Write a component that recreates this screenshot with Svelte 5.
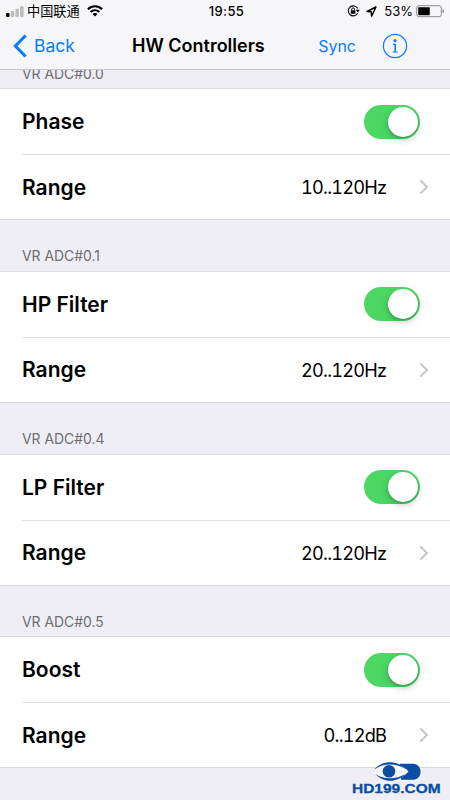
<script>
  const sections = [
    { header: 'VR ADC#0.0', name: 'Phase', range: '10..120Hz' },
    { header: 'VR ADC#0.1', name: 'HP Filter', range: '20..120Hz' },
    { header: 'VR ADC#0.4', name: 'LP Filter', range: '20..120Hz' },
    { header: 'VR ADC#0.5', name: 'Boost', range: '0..12dB' }
  ];
</script>

<div class="screen">
  <header class="top">
    <div class="status">
      <div class="carrier">
        <svg class="bars" width="18" height="12" viewBox="0 0 18 12">
          <rect x="0" y="7" width="3.5" height="4" rx="1" fill="#050505" />
          <rect x="4.7" y="5" width="3.5" height="6" rx="1" fill="#bdbdbe" />
          <rect x="9.4" y="2.7" width="3.5" height="8.3" rx="1" fill="#bdbdbe" />
          <rect x="14.1" y="0.3" width="3.5" height="10.7" rx="1" fill="#bdbdbe" />
        </svg>
        <span class="operator">中国联通</span>
        <svg class="wifi" width="16" height="12" viewBox="0 0 16 12" fill="none" stroke="#000" stroke-width="2.1">
          <path d="M.9 4.2C5 .3 11 .3 15.1 4.2" />
          <path d="M3.6 7C6.2 4.6 9.8 4.6 12.4 7" />
          <path d="M8 11.4 5.5 8.9C7 7.7 9 7.7 10.5 8.9Z" fill="#000" stroke="none" />
        </svg>
      </div>
      <span class="clock">19:55</span>
      <div class="indicators">
        <svg class="lock" width="13" height="12" viewBox="0 0 13 12">
          <path d="M10.7 8.2A5 5 0 1 1 10.7 3.5" fill="none" stroke="#000" stroke-width="1.1" />
          <path d="M8.8 4.8h4l-2 2.8Z" />
          <rect x="3.8" y="5.3" width="4.6" height="3.5" rx=".4" />
          <path d="M4.7 5.5V4.3a1.4 1.4 0 0 1 2.8 0v1.2" fill="none" stroke="#000" stroke-width="1" />
        </svg>
        <svg class="arrow" width="11" height="11" viewBox="0 0 11 11">
          <path d="M1 5.5 10 1 5.6 10.1 5.2 5.8Z" fill="none" stroke="#000" stroke-width="1.4" stroke-linejoin="round" />
        </svg>
        <span class="percent">53%</span>
        <svg class="battery" width="29" height="13" viewBox="0 0 29 13">
          <rect x=".7" y=".7" width="24.6" height="11" rx="2.3" fill="none" stroke="#8b8b8c" stroke-width="1" />
          <rect x="2.2" y="2.2" width="11.6" height="8" rx=".6" />
          <path d="M26.5 4.2q1.6.5 1.6 2t-1.6 2Z" fill="#8b8b8c" />
        </svg>
      </div>
    </div>
    <nav class="nav">
      <div class="back">
        <svg width="15" height="24" viewBox="0 0 15 24" fill="none" stroke="#087dfc" stroke-width="3.1">
          <path d="M12.6 1.5 2.4 12 12.6 22.5" />
        </svg>
        <span>Back</span>
      </div>
      <span class="title">HW Controllers</span>
      <div class="actions">
        <span class="sync">Sync</span>
        <svg width="26" height="26" viewBox="0 0 26 26" fill="#087dfc">
          <circle cx="13" cy="13" r="11.6" fill="none" stroke="#087dfc" stroke-width="1.2" />
          <circle cx="13" cy="7.6" r="1.6" />
          <path d="M10.8 10.8H14v7.6h1.8v1.1h-5.2v-1.1h1.8v-6.5h-1.6Z" />
        </svg>
      </div>
    </nav>
  </header>

  <main class="list">
    {#each sections as section}
      <section>
        <h2>{section.header}</h2>
        <div class="rows">
          <div class="row">
            <span class="label">{section.name}</span>
            <span class="toggle"><span class="knob"></span></span>
          </div>
          <div class="row second">
            <span class="label">Range</span>
            <span class="value">{section.range}</span>
            <svg class="chevron" width="10" height="16" viewBox="0 0 10 16" fill="none" stroke="#c5c5ca" stroke-width="2">
              <path d="M1.3 1.4 8 8 1.3 14.6" />
            </svg>
          </div>
        </div>
      </section>
    {/each}
  </main>

  <div class="watermark">
    <svg width="50" height="21" viewBox="0 0 50 21">
      <path d="M27 2.8H40C50 2.8 50 18.8 40 18.8H28Z" fill="#0b4da2" />
      <path d="M1.5 9.5C9-.5 26-1 35.5 10.5C26 22 9 21.5 1.5 11.5Z" fill="#f5f7fc" />
      <path d="M1 8.8C9-1.2 24-1.2 33.5 8.6C23 1.8 10 2 1 8.8Z" fill="#0b4da2" />
      <path d="M2.5 13C10 22 24 22 32.5 13C23 18.6 11 18.8 2.5 13Z" fill="#0b4da2" />
      <circle cx="16" cy="10.3" r="6.3" fill="#0b4da2" />
    </svg>
    <span>HD199.COM</span>
  </div>
</div>

<style>
  :global(body) { margin: 0; }
  .screen {
    position: relative;
    width: 450px;
    height: 800px;
    overflow: hidden;
    display: flex;
    flex-direction: column;
    background: #efeef4;
    color: #000;
    font-family: Inter, "Noto Sans CJK SC", sans-serif;
  }
  .top {
    position: relative;
    z-index: 1;
    flex: none;
    height: 70px;
    box-sizing: border-box;
    background: #f6f6f8;
    border-bottom: 1px solid #c9c9cd;
  }
  .status {
    height: 22px;
    display: grid;
    grid-template-columns: 1fr auto 1fr;
    align-items: center;
    padding: 0 5px 0 6px;
  }
  .carrier, .indicators, .back, .actions { display: flex; align-items: center; }
  .bars { margin-top: 1px; }
  .operator { margin-left: 3px; width: 53px; font: 13.2px/22px "Noto Sans CJK SC", sans-serif; white-space: nowrap; }
  .wifi { margin-left: 7px; }
  .clock { font-size: 13px; font-weight: 500; letter-spacing: .4px; line-height: 22px; margin-left: 2px; }
  .indicators { justify-content: flex-end; }
  .arrow { margin-left: 6px; }
  .percent { margin-left: 7px; margin-right: 3px; font-size: 13px; line-height: 22px; }
  .nav {
    height: 47px;
    display: grid;
    grid-template-columns: 119px 1fr auto;
    align-items: center;
    padding: 0 42px 0 13px;
  }
  .back { color: #087dfc; font-size: 17.5px; gap: 6px; }
  .title { font-size: 18px; font-weight: 600; }
  .actions { justify-content: flex-end; gap: 26px; color: #087dfc; }
  .sync { font-size: 16px; }
  .list { margin-top: -33.4px; }
  h2 {
    margin: 0;
    height: 52.65px;
    box-sizing: border-box;
    padding: 28px 0 0 22px;
    font-size: 13.9px;
    line-height: 18px;
    font-weight: 400;
    color: #6d6d72;
  }
  .rows {
    height: 130px;
    box-sizing: border-box;
    background: #fff;
    box-shadow: 0 -1px #dedee1, 0 1px #d8d8dc;
  }
  .row {
    height: 65px;
    box-sizing: border-box;
    display: flex;
    align-items: center;
    padding-right: 30px;
    margin-left: 22px;
  }
  .second { border-top: 1px solid #e1e1e3; padding-right: 21px; }
  .label { flex: 1; font-size: 21px; font-weight: 600; }
  .value { font-size: 18.2px; font-variant-numeric: tabular-nums; letter-spacing: -.8px; }
  .chevron { margin-left: 32.8px; }
  .toggle {
    display: flex;
    justify-content: flex-end;
    box-sizing: border-box;
    width: 56px;
    height: 34px;
    padding: 2px;
    border-radius: 17px;
    background: #4bd763;
  }
  .knob { width: 30px; height: 30px; border-radius: 50%; background: #fff; box-shadow: 0 3px 7px rgba(0, 0, 0, .22), 0 1px 2px rgba(0, 0, 0, .15); }
  .watermark {
    position: absolute;
    left: 351.5px;
    top: 761px;
    display: flex;
    flex-direction: column;
    color: #0b4da2;
  }
  .watermark svg { margin-left: 21px; }
  .watermark span { font: bold 13.3px/14px "Liberation Sans", sans-serif; -webkit-text-stroke: .3px #0b4da2; transform: scaleX(1.165); transform-origin: left; width: 76px; }
</style>
